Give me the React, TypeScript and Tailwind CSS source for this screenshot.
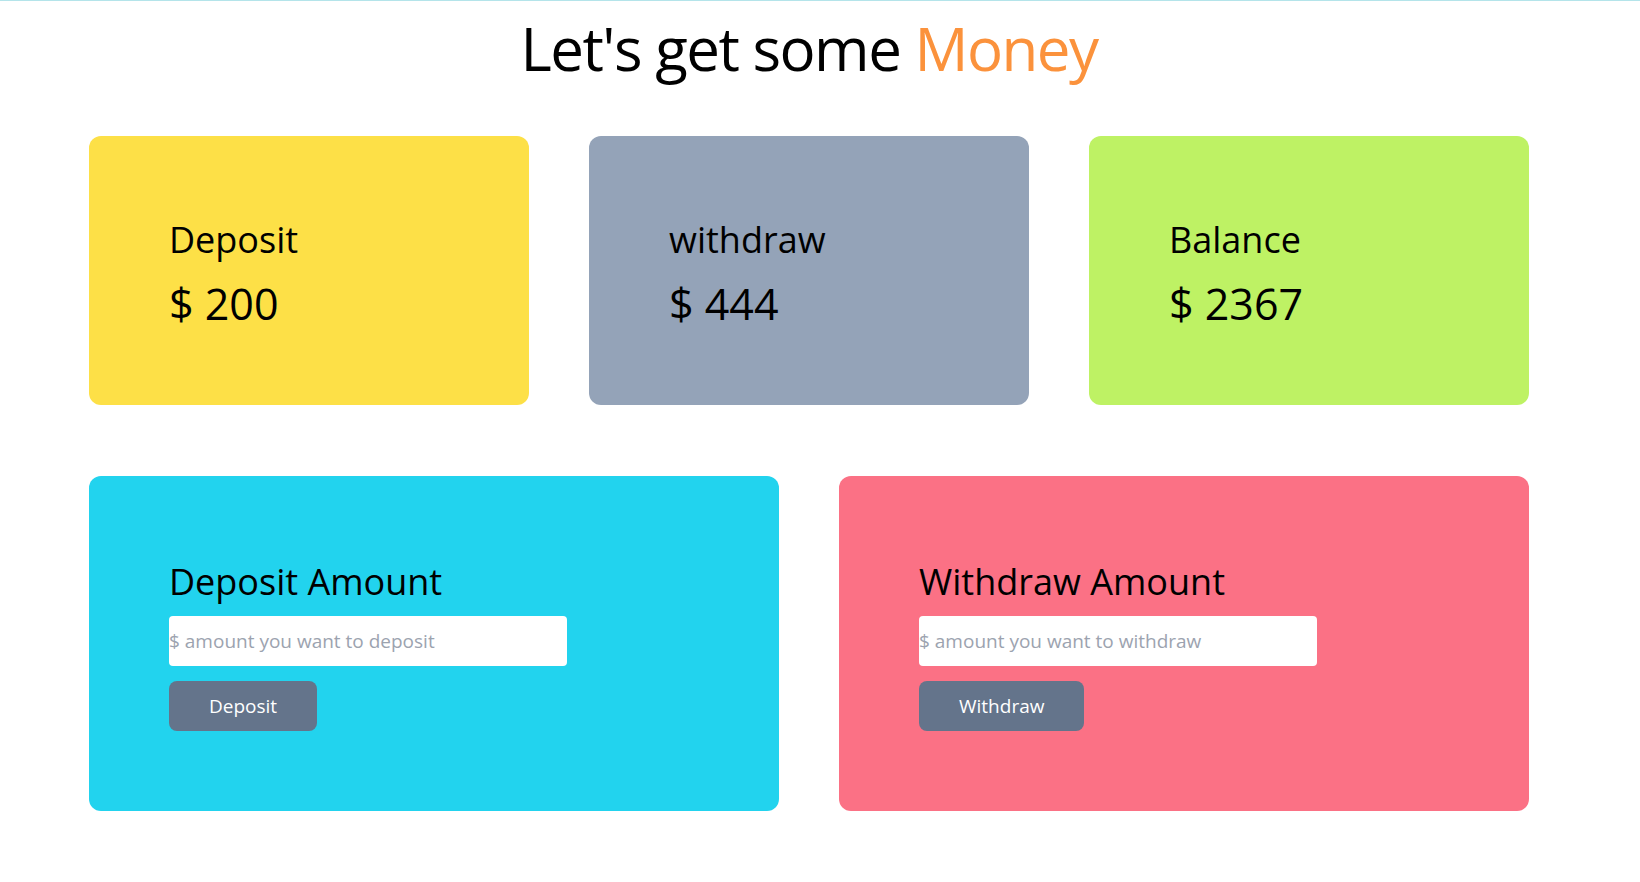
import React from "react";

const font = { fontFamily: '"Open Sans", "Noto Sans", sans-serif' };

function StatCard({ label, amount, color }: { label: string; amount: string; color: string }) {
  return (
    <div className={`h-[269px] rounded-xl pl-20 pt-[86px] ${color}`}>
      <div className="text-[36px] leading-none text-black">{label}</div>
      <div className="mt-[24px] text-[43px] leading-none text-black">{amount}</div>
    </div>
  );
}

function ActionCard({
  title,
  placeholder,
  button,
  color,
}: {
  title: string;
  placeholder: string;
  button: string;
  color: string;
}) {
  return (
    <div className={`h-[335px] rounded-xl pl-20 pt-[88px] ${color}`}>
      <div className="text-[36px] leading-none text-black">{title}</div>
      <input
        type="text"
        placeholder={placeholder}
        className="mt-[16px] block h-[50px] w-[398px] rounded-sm bg-white text-[19px] text-black outline-none placeholder:text-[#9ca3af]"
        style={font}
      />
      <button className="mt-[15px] block h-[50px] rounded-lg bg-[#64748b] px-10 text-[19px] text-white" style={font}>
        {button}
      </button>
    </div>
  );
}

export default function App() {
  return (
    <div className="min-h-[882px] border-t border-[#b4e4ea] bg-white" style={font}>
      <div className="ml-[89px] w-[1440px]">
        <h1 className="mt-[17px] text-center text-[60px] leading-none tracking-tight text-black">
          Let's get some <span className="text-[#fb923c]">Money</span>
        </h1>
        <div className="mt-[58px] grid grid-cols-3 gap-[60px]">
          <StatCard label="Deposit" amount="$ 200" color="bg-[#fde047]" />
          <StatCard label="withdraw" amount="$ 444" color="bg-[#94a3b8]" />
          <StatCard label="Balance" amount="$ 2367" color="bg-[#bef264]" />
        </div>
        <div className="mt-[71px] grid grid-cols-2 gap-[60px]">
          <ActionCard
            title="Deposit Amount"
            placeholder="$ amount you want to deposit"
            button="Deposit"
            color="bg-[#22d3ee]"
          />
          <ActionCard
            title="Withdraw Amount"
            placeholder="$ amount you want to withdraw"
            button="Withdraw"
            color="bg-[#fb7185]"
          />
        </div>
      </div>
    </div>
  );
}
